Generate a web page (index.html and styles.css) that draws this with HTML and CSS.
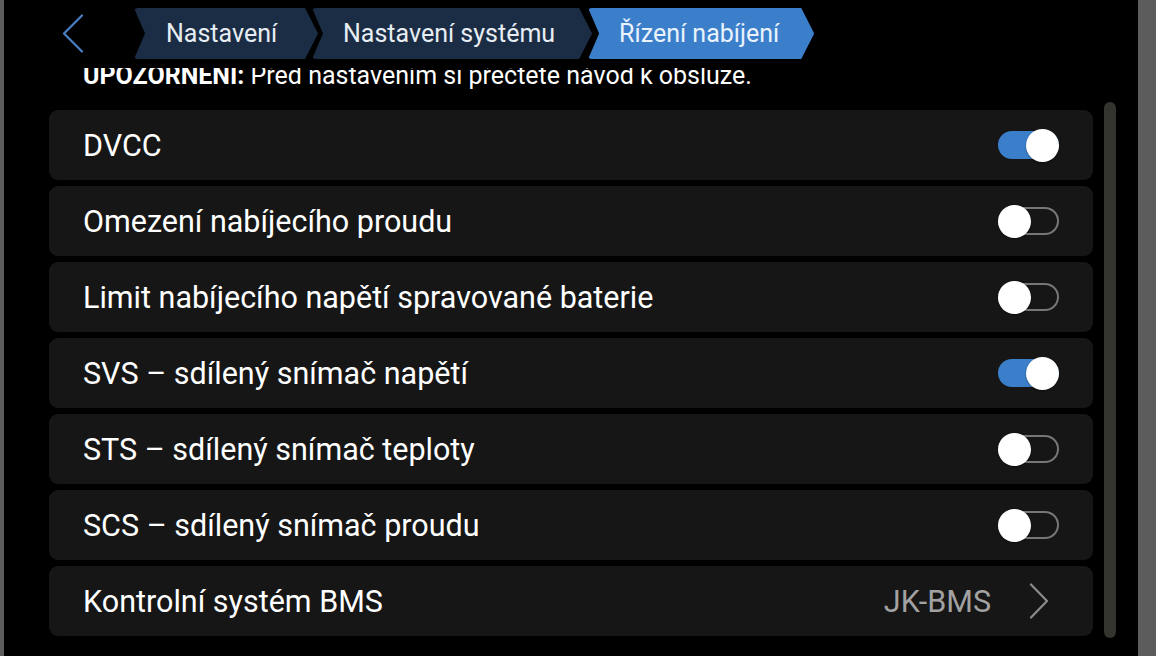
FILE: index.html
```html
<!DOCTYPE html>
<html lang="cs">
<head>
<meta charset="utf-8">
<title>Řízení nabíjení</title>
<link rel="stylesheet" href="styles.css">
</head>
<body>
<div class="panel">
  <header class="header">
    <button class="back" aria-label="Zpět">
      <svg width="22" height="39" viewBox="0 0 22 39"><path d="M20 1.5 L2 19.5 L20 37.5" fill="none" stroke="#4a80c4" stroke-width="2.2" stroke-linecap="round" stroke-linejoin="round"/></svg>
    </button>
    <nav class="crumbs">
      <span class="crumb crumb-first">Nastavení</span>
      <span class="crumb">Nastavení systému</span>
      <span class="crumb crumb-active">Řízení nabíjení</span>
    </nav>
  </header>
  <main class="scroll">
    <div class="content">
      <p class="warning"><b>UPOZORNĚNÍ:</b> Před nastavením si přečtete návod k obsluze.</p>
      <ul class="list">
        <li class="row"><span class="label">DVCC</span><span class="switch on"><span class="knob"></span></span></li>
        <li class="row"><span class="label">Omezení nabíjecího proudu</span><span class="switch"><span class="knob"></span></span></li>
        <li class="row"><span class="label">Limit nabíjecího napětí spravované baterie</span><span class="switch"><span class="knob"></span></span></li>
        <li class="row"><span class="label">SVS – sdílený snímač napětí</span><span class="switch on"><span class="knob"></span></span></li>
        <li class="row"><span class="label">STS – sdílený snímač teploty</span><span class="switch"><span class="knob"></span></span></li>
        <li class="row"><span class="label">SCS – sdílený snímač proudu</span><span class="switch"><span class="knob"></span></span></li>
        <li class="row"><span class="label">Kontrolní systém BMS</span><span class="value">JK-BMS</span><span class="chev"><svg width="20" height="36" viewBox="0 0 20 36"><path d="M2 1.5 L18 18 L2 34.5" fill="none" stroke="#8c8c8c" stroke-width="2.2" stroke-linecap="round" stroke-linejoin="round"/></svg></span></li>
      </ul>
    </div>
    <div class="scrollbar"></div>
  </main>
</div>
</body>
</html>
```
FILE: styles.css
```css
* { box-sizing: border-box; }
html, body { margin: 0; padding: 0; }
body {
  background: #5c5c5c;
  width: 1156px;
  height: 656px;
  overflow: hidden;
  font-family: Roboto, "Noto Sans", "DejaVu Sans", sans-serif;
}
.panel {
  margin-left: 4px;
  width: 1134px;
  height: 656px;
  background: #000;
  display: flex;
  flex-direction: column;
  overflow: hidden;
}
.header {
  height: 68px;
  flex: none;
  display: flex;
  align-items: flex-start;
  padding-top: 8px;
  position: relative;
  z-index: 2;
  background: #000;
}
.back {
  margin: 6px 0 0 58px;
  padding: 0;
  border: 0;
  background: none;
  width: 22px;
  height: 39px;
  display: flex;
}
.crumbs {
  display: flex;
  margin-left: 50px;
}
.crumb {
  height: 51px;
  display: flex;
  align-items: center;
  padding: 0 37px 0 31px;
  background: #1b2d45;
  color: #e8edf3;
  font-size: 25px;
  white-space: nowrap;
  border-radius: 4px;
  clip-path: polygon(0 0, calc(100% - 13px) 0, 100% 50%, calc(100% - 13px) 100%, 0 100%, 11px 50%);
}
.crumb + .crumb { margin-left: -6px; }
.crumb-first { min-width: 184px; padding-left: 32px; }
.crumb + .crumb-active { margin-left: -4px; padding-right: 35px; background: #3b7fcb; color: #eaf2fb; }
.scroll {
  flex: 1;
  display: flex;
  overflow: hidden;
  padding-left: 45px;
}
.content {
  width: 1044px;
  display: flex;
  flex-direction: column;
}
.warning {
  margin: -6px 0 0 34px;
  font-size: 25px;
  line-height: 28px;
  color: #fff;
  white-space: nowrap;
}
.warning b { font-weight: 700; }
.list {
  list-style: none;
  margin: 20px 0 0;
  padding: 0;
  display: flex;
  flex-direction: column;
  gap: 6px;
}
.row {
  height: 70px;
  background: #161616;
  border-radius: 9px;
  display: flex;
  align-items: center;
  padding: 0 34px;
  color: #fff;
  font-size: 30.5px;
}
.label { flex: 1; white-space: nowrap; }
.switch {
  width: 61px;
  height: 28px;
  border-radius: 14px;
  border: 2px solid #777;
  position: relative;
  flex: none;
}
.switch.on { background: #3b7fcb; border-color: #3b7fcb; }
.knob {
  position: absolute;
  width: 33px;
  height: 33px;
  border-radius: 50%;
  background: #fff;
  top: -4.5px;
  left: -2px;
  box-shadow: 0 1px 2px rgba(0,0,0,0.4);
}
.switch.on .knob { left: auto; right: -2px; }
.value {
  color: #a2a2a2;
  font-size: 30.5px;
  margin-right: 38px;
}
.chev {
  width: 30px;
  display: flex;
  justify-content: flex-start;
}
.scrollbar {
  width: 12px;
  margin: 34px 0 18px 11px;
  background: #34342f;
  border-radius: 6px;
}
```
